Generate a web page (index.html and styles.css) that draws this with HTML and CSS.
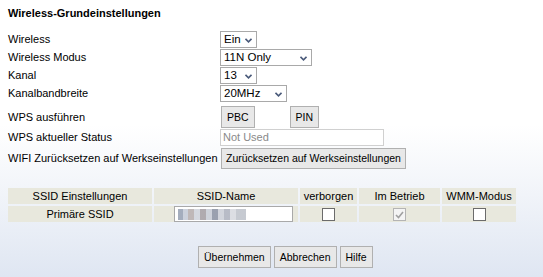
FILE: index.html
```html
<!DOCTYPE html>
<html lang="de">
  <head>
    <meta charset="UTF-8" />
    <title>Wireless-Grundeinstellungen</title>
    <link rel="stylesheet" href="styles.css">
  </head>
  <body>
    <div class="page">
      <h1 class="title">Wireless-Grundeinstellungen</h1>

      <div class="settings">
        <div class="row sel-row">
          <label class="lbl">Wireless</label>
          <span class="sel w-ein">
            <select><option>Ein</option><option>Aus</option></select>
            <svg class="arrow" width="7" height="5" viewBox="0 0 7 5"><path d="M0.5 0.8 L3.5 3.8 L6.5 0.8" fill="none" stroke="#4a5a7a" stroke-width="1.6"/></svg>
          </span>
        </div>
        <div class="row sel-row">
          <label class="lbl">Wireless Modus</label>
          <span class="sel w-mode">
            <select><option>11N Only</option><option>11B/G/N</option></select>
            <svg class="arrow" width="7" height="5" viewBox="0 0 7 5"><path d="M0.5 0.8 L3.5 3.8 L6.5 0.8" fill="none" stroke="#4a5a7a" stroke-width="1.6"/></svg>
          </span>
        </div>
        <div class="row sel-row">
          <label class="lbl">Kanal</label>
          <span class="sel w-chan">
            <select><option>13</option><option>Auto</option></select>
            <svg class="arrow" width="7" height="5" viewBox="0 0 7 5"><path d="M0.5 0.8 L3.5 3.8 L6.5 0.8" fill="none" stroke="#4a5a7a" stroke-width="1.6"/></svg>
          </span>
        </div>
        <div class="row sel-row">
          <label class="lbl">Kanalbandbreite</label>
          <span class="sel w-bw">
            <select><option>20MHz</option><option>40MHz</option></select>
            <svg class="arrow" width="7" height="5" viewBox="0 0 7 5"><path d="M0.5 0.8 L3.5 3.8 L6.5 0.8" fill="none" stroke="#4a5a7a" stroke-width="1.6"/></svg>
          </span>
        </div>
        <div class="row wps-row">
          <label class="lbl">WPS ausführen</label>
          <div class="wps-btns">
            <button class="btn btn-tall">PBC</button>
            <button class="btn btn-tall">PIN</button>
          </div>
        </div>
        <div class="row status-row">
          <label class="lbl">WPS aktueller Status</label>
          <input class="status" type="text" value="Not Used" readonly />
        </div>
        <div class="row reset-row">
          <label class="lbl">WIFI Zurücksetzen auf Werkseinstellungen</label>
          <button class="btn">Zurücksetzen auf Werkseinstellungen</button>
        </div>
      </div>

      <table class="ssid">
        <tr>
          <th class="c1">SSID Einstellungen</th>
          <th class="c2">SSID-Name</th>
          <th class="c3">verborgen</th>
          <th class="c4">Im Betrieb</th>
          <th class="c5">WMM-Modus</th>
        </tr>
        <tr>
          <td>Primäre SSID</td>
          <td>
            <span class="ssid-input"><span class="blur"></span></span>
          </td>
          <td><span class="cb"></span></td>
          <td><span class="cb cb-off"><svg width="9" height="8" viewBox="0 0 9 8"><path d="M1 4 L3.5 6.5 L8 1" fill="none" stroke="#a0a0a0" stroke-width="1.6"/></svg></span></td>
          <td><span class="cb"></span></td>
        </tr>
      </table>

      <div class="actions">
        <button class="btn btn-tall">Übernehmen</button>
        <button class="btn btn-tall">Abbrechen</button>
        <button class="btn btn-tall">Hilfe</button>
      </div>
    </div>
  </body>
</html>
```

FILE: styles.css
```css
/* Styling */
* {
  font-family: "Liberation Sans", Arial, sans-serif;
  box-sizing: border-box;
}
html,
body {
  margin: 0;
  height: 100%;
}
body {
  background: linear-gradient(to bottom, #ffffff 0%, #ffffff 45%, #f1f4f9 70%, #dfe6f2 100%);
  color: #000;
  font-size: 11px;
}
.page {
  padding: 5px 8px 0 8px;
}
.title {
  font-size: 11px;
  font-weight: bold;
  margin: 0;
  height: 25px;
  line-height: 16px;
}
.settings {
  display: flex;
  flex-direction: column;
}
.row {
  display: flex;
  align-items: center;
}
.lbl {
  width: 212px;
  flex: none;
  white-space: nowrap;
}
.sel-row {
  height: 18px;
}
.sel {
  position: relative;
  display: inline-block;
  height: 17px;
}
.sel select {
  appearance: none;
  -webkit-appearance: none;
  height: 17px;
  border: 1px solid #a9a9a9;
  background: #fff;
  padding: 0 0 0 3px;
  font-size: 11.5px;
  color: #000;
  border-radius: 0;
  width: 100%;
}
.sel .arrow {
  position: absolute;
  right: 5px;
  top: 7px;
}
.w-ein { width: 37px; }
.w-mode { width: 92px; }
.w-chan { width: 37px; }
.w-bw { width: 67px; }
.wps-row {
  height: 26px;
  padding-top: 3px;
}
.wps-btns {
  display: flex;
  gap: 35px;
  padding-left: 1px;
}
.wps-btns .btn {
  padding: 0 5px;
}
.btn {
  height: 21px;
  padding: 0 3px;
  margin: 0;
  border: 1px solid #b0b0b0;
  background: #e8e8e8;
  font-size: 10.5px;
  color: #000;
  border-radius: 0;
}
.btn-tall {
  height: 22px;
}
.status-row {
  height: 18px;
}
.status {
  width: 164px;
  height: 17px;
  border: 1px solid #d0d0d0;
  padding: 0 2px;
  font-size: 11px;
  color: #8a8a8a;
  background: #fff;
}
.reset-row {
  height: 23px;
  padding-top: 1px;
}
.reset-row .btn {
  margin-left: 1px;
  padding: 0 4px;
}
.ssid {
  margin-top: 17px;
  border-spacing: 2px;
  margin-left: -2px;
}
.ssid th,
.ssid td {
  background: #e8e8dd;
  font-weight: normal;
  text-align: center;
  height: 16px;
  padding: 0;
  font-size: 11px;
}
.c1 { width: 144px; }
.c2 { width: 144px; }
.c3 { width: 57px; }
.c4 { width: 81px; }
.c5 { width: 74px; }
.ssid-input {
  display: inline-block;
  width: 119px;
  height: 16px;
  margin-left: 14px;
  margin-top: 0;
  vertical-align: middle;
  background: #fff;
  border: 1px solid #a9a9a9;
  text-align: left;
  padding: 2px 0 0 3px;
}
.blur {
  display: block;
  width: 68px;
  height: 11px;
  background:
    linear-gradient(to right, #9aa4b6 0 5px, #c6ccd8 5px 10px, #b8b0b0 10px 16px, #d0d4dc 16px 22px, #a7a1a6 22px 28px, #c9cdd6 28px 34px, #8f96a6 34px 40px, #cdd0d8 40px 46px, #b0b4c0 46px 52px, #d8dae0 52px 58px, #c0c4cc 58px 68px);
  opacity: 0.9;
}
.cb {
  display: inline-block;
  width: 13px;
  height: 13px;
  border: 1px solid #6b6b6b;
  background: #fff;
  vertical-align: middle;
  position: relative;
}
.cb-off {
  border-color: #b4b4b4;
  background: #f4f4f4;
}
.cb svg {
  position: absolute;
  left: 1px;
  top: 2px;
}
.actions {
  display: flex;
  gap: 3px;
  padding-left: 190px;
  margin-top: 22px;
}
.actions .btn {
  padding: 0 5px;
}
```
